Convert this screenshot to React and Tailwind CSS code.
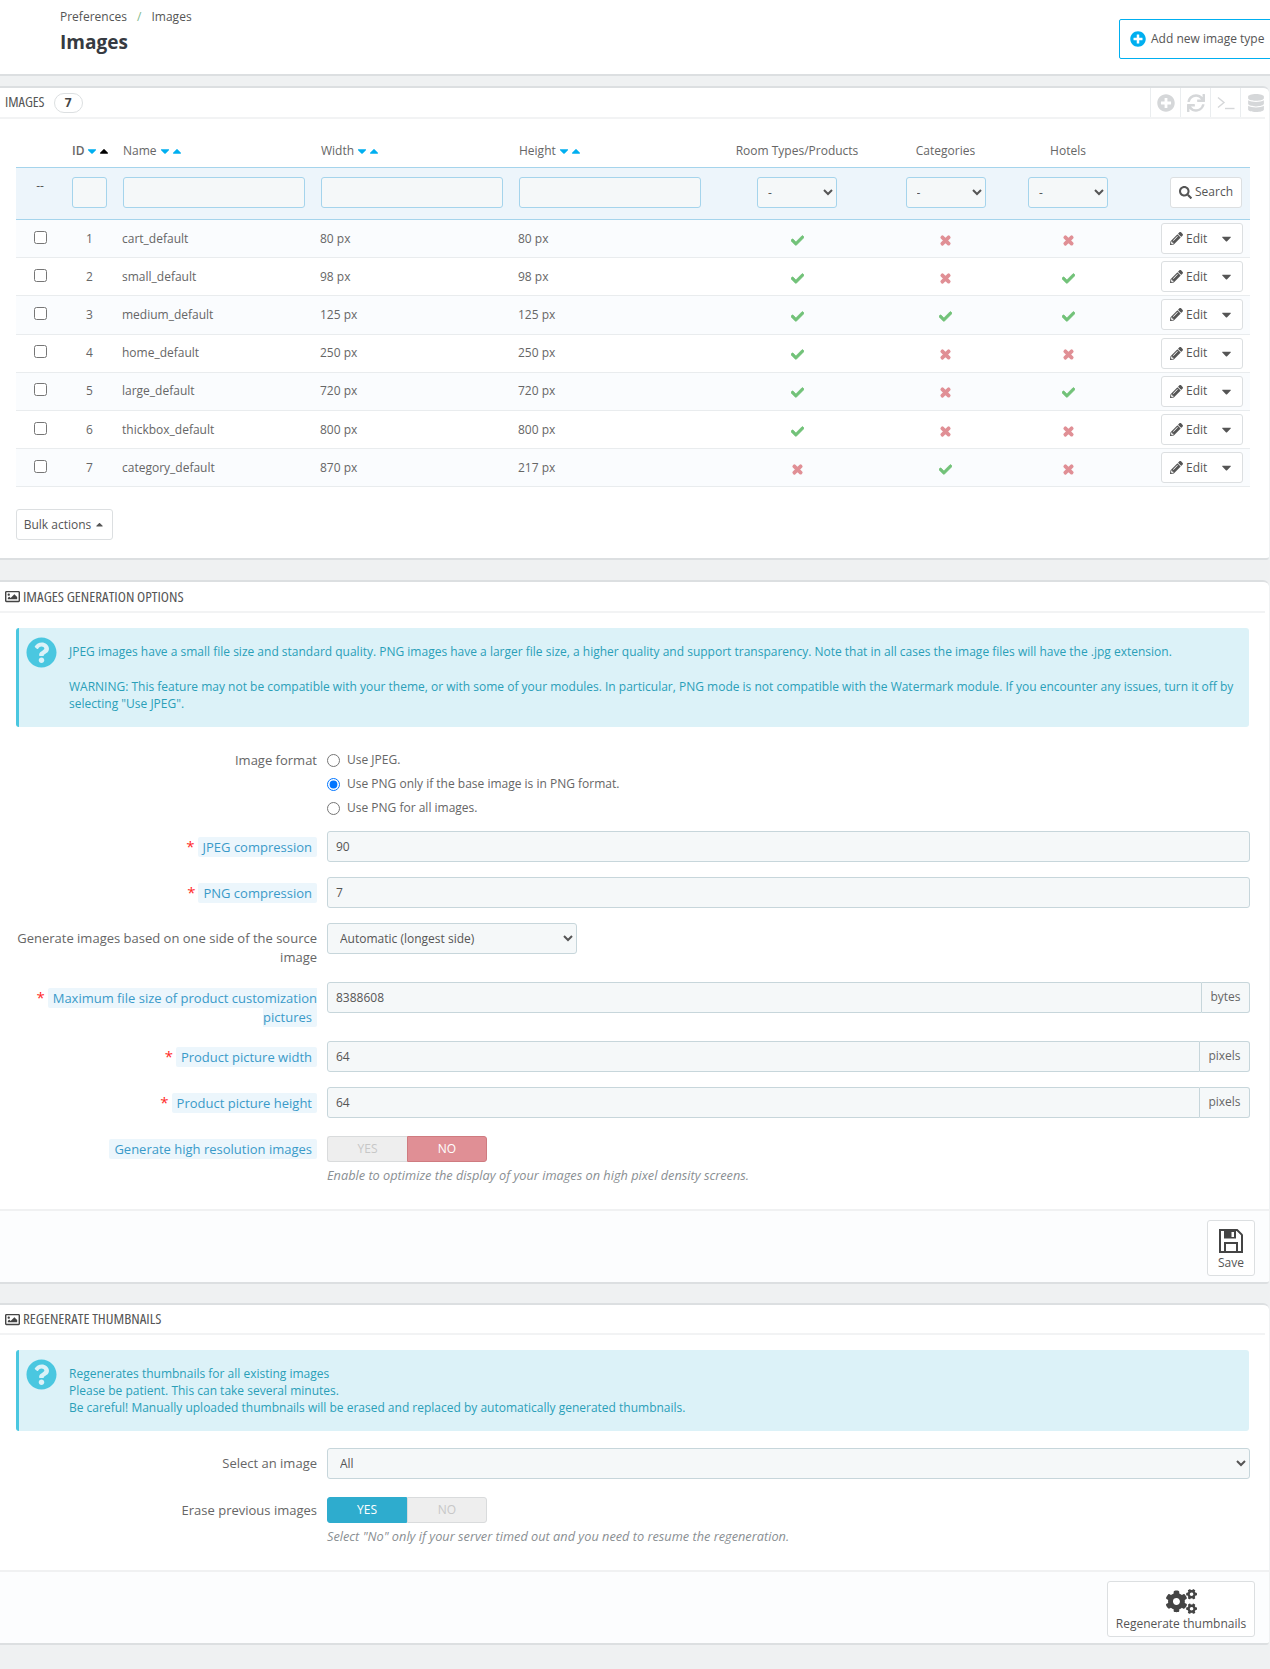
import React from "react";
import { FaPlusCircle, FaSync, FaDatabase, FaCheck, FaTimes, FaPencilAlt, FaSearch, FaCaretDown, FaCaretUp, FaRegImage, FaQuestionCircle, FaCogs } from "react-icons/fa";

const rows = [
  [1, "cart_default", "80 px", "80 px", 1, 0, 0],
  [2, "small_default", "98 px", "98 px", 1, 0, 1],
  [3, "medium_default", "125 px", "125 px", 1, 1, 1],
  [4, "home_default", "250 px", "250 px", 1, 0, 0],
  [5, "large_default", "720 px", "720 px", 1, 0, 1],
  [6, "thickbox_default", "800 px", "800 px", 1, 0, 0],
  [7, "category_default", "870 px", "217 px", 0, 1, 0],
];

function Sort({ active }) {
  return (
    <span className="inline-flex items-center ml-[1px] text-[#00aff0] text-[14px]">
      <FaCaretDown className="-mr-[2px]" />
      <FaCaretUp className={active ? "text-black" : ""} />
    </span>
  );
}

function Mark({ on }) {
  return on
    ? <FaCheck stroke="currentColor" strokeWidth="30" className="text-[#72c279] text-[13px] mt-[3px]" />
    : <FaTimes stroke="currentColor" strokeWidth="50" className="text-[#e08f95] text-[13px] mt-[3px]" />;
}

function Title({ children, size = "text-[15px]" }) {
  return <span className={`${size} -mt-[2px] text-[#555] uppercase whitespace-nowrap font-stretch-[75%]`}>{children}</span>;
}

function Heading({ children, h = "h-[31px]" }) {
  return (
    <div className={`${h} mr-[4px] border-b-2 border-[#f2f3f4] flex items-center pl-[5px]`}>
      <FaRegImage className="text-[15px] mr-[3px] text-[#444]" />
      <Title>{children}</Title>
    </div>
  );
}

function Panel({ children }) {
  return <section className="bg-white border-t-2 border-b-2 border-[#dcdfe1] rounded-tr-[6px] rounded-br-[3px] mr-[1px]">{children}</section>;
}

function Info({ children, h }) {
  return (
    <div className={`mx-[20px] ml-[16px] mt-[15px] bg-[#dcf2f8] border-l-[3px] border-[#4ac7e0] rounded-[3px] flex text-[#2a9fb8] text-[12px] leading-[17px] ${h}`}>
      <FaQuestionCircle className="text-[#4ac7e0] text-[31px] ml-[7px] mt-[9px] shrink-0" />
      <div className="ml-[12px] flex-1">{children}</div>
    </div>
  );
}

function Row({ label, req, tip, top, mt, children }) {
  return (
    <div className={`flex ${mt}`}>
      <div className="w-[317px] shrink-0 text-right text-[13px] leading-[19px] text-[#666]" style={{ paddingTop: top }}>
        {req && <span className="text-[#ff2a2a] text-[15px] mr-[3px]">*</span>}
        {tip ? <span className="bg-[#ecf6fc] text-[#3a9ac9] px-[5px] py-[1px] rounded-[2px]">{label}</span> : label}
      </div>
      <div className="ml-[10px] w-[923px]">{children}</div>
    </div>
  );
}

const inputCls = "h-[31px] bg-[#f5f8f9] border border-[#c7d6db] rounded-[3px] text-[12px] text-[#555] flex items-center pl-[8px]";

function Input({ value, addon }) {
  if (addon) {
    return (
      <div className="flex h-[31px]">
        <div className={`${inputCls} flex-1 rounded-r-none`}>{value}</div>
        <div className={`bg-[#f5f8f9] border border-l-0 border-[#c7d6db] rounded-r-[3px] text-[12px] text-[#666] flex items-center justify-center pb-[1px] ${addon === "bytes" ? "w-[48px]" : "w-[50px]"}`}>{addon}</div>
      </div>
    );
  }
  return <div className={inputCls}>{value}</div>;
}

function Select({ value, w }) {
  return (
    <select defaultValue={value} className={`h-[31px] bg-[#f5f8f9] border border-[#c7d6db] rounded-[3px] text-[12px] text-[#555] pl-[8px] ${w}`}>
      <option>{value}</option>
    </select>
  );
}

function Toggle({ yes }) {
  return (
    <div className="flex w-[160px] h-[26px] text-[12px]">
      <div className={`w-[80px] flex items-center justify-center rounded-l-[3px] ${yes ? "bg-[#2eacce] text-white border border-[#2eacce]" : "bg-[#eeeeee] text-[#c7c7c7] border border-[#d9dbdc] border-r-0"}`}>YES</div>
      <div className={`w-[80px] flex items-center justify-center rounded-r-[3px] ${yes ? "bg-[#eeeeee] text-[#c7c7c7] border border-[#d9dbdc]" : "bg-[#e08f95] text-white border border-[#cf7b80]"}`}>NO</div>
    </div>
  );
}

function Help({ children }) {
  return <p className="mt-[5px] text-[12.75px] leading-[17px] italic text-[#8a8f93]">{children}</p>;
}

function Radio({ label, on }) {
  return (
    <label className="flex items-center h-[24px] text-[12px] text-[#666]">
      <input type="radio" name="fmt" defaultChecked={on} className="w-[13px] h-[13px] m-0" />
      <span className="ml-[7px]">{label}</span>
    </label>
  );
}

function FootBtn({ icon, label, w }) {
  return (
    <div className="h-[73px] bg-[#fcfdfe] border-t-2 border-[#f0f1f2] flex justify-end pt-[9px] pr-[14px] rounded-br-[3px]">
      <div className={`h-[56px] bg-white border border-[#dcdfe1] rounded-[3px] flex flex-col items-center justify-end pb-[4px] text-[12px] leading-[16px] text-[#555] ${w}`}>
        {icon}
        <span>{label}</span>
      </div>
    </div>
  );
}

function ToolIcon({ children }) {
  return <div className="w-[30px] h-[29px] border-l border-[#eaedef] flex items-center justify-center text-[#d5d7d9] text-[18px]">{children}</div>;
}

function Floppy() {
  return (
    <svg width="24" height="24" viewBox="0 0 24 24" className="mb-[2px] text-[#444]">
      <path fill="currentColor" d="M0 0H18.5L24 5.5V24H0Z" />
      <path fill="#fff" d="M2 2H5V9.5H17V2H17.7L22 6.3V22H19V13H5V22H2Z" />
      <path fill="#fff" d="M7 15H17V22H7Z" />
      <path fill="#fff" d="M12.5 3H15V8H12.5Z" />
    </svg>
  );
}

const filterCls = "h-[31px] bg-[#f5f8f9] border border-[#a5d4ec] rounded-[3px]";

export default function App() {
  return (
    <div className="w-[1270px] min-h-[1669px] bg-[#eff1f2] overflow-hidden text-[#666]" style={{ fontFamily: '"Open Sans",sans-serif' }}>
      <header className="h-[76px] bg-white border-b-2 border-[#dcdfe1] flex">
        <div className="ml-[60px] pt-[8px]">
          <div className="text-[12px] leading-[17px] text-[#555]">
            Preferences <span className="text-[#7fb98e] mx-[7px]">/</span> Images
          </div>
          <h1 className="mt-[4px] text-[19px] leading-[27px] font-bold text-[#363a41]">Images</h1>
        </div>
        <div className="ml-auto mt-[19px] -mr-[6px] h-[40px] w-[157px] shrink-0 border border-[#00aff0] rounded-l-[2px] flex items-center pl-[10px] text-[12px] text-[#555] whitespace-nowrap">
          <FaPlusCircle className="text-[#00aff0] text-[16px] mr-[5px]" />
          Add new image type
        </div>
      </header>

      <div className="mt-[10px]">
        <Panel>
          <div className="h-[31px] mr-[4px] border-b-2 border-[#f2f3f4] flex items-center pl-[5px]">
            <Title size="text-[14.5px]">Images</Title>
            <span className="ml-[9px] w-[29px] h-[20px] border border-[#dcdfe1] rounded-full flex items-center justify-center text-[12px] font-bold text-[#444]">7</span>
            <div className="ml-auto -mr-[5px] flex">
              <ToolIcon><FaPlusCircle /></ToolIcon>
              <ToolIcon><FaSync /></ToolIcon>
              <ToolIcon>
                <svg width="18" height="14" viewBox="0 0 18 14" fill="none" stroke="currentColor" strokeWidth="1.4">
                  <path d="M1 1.5 7 6.5 1 11.5" />
                  <path d="M8 12.5H17.5" />
                </svg>
              </ToolIcon>
              <ToolIcon><FaDatabase /></ToolIcon>
            </div>
          </div>

          <div className="ml-[16px] w-[1234px] mt-[17px] text-[12px]">
            <div className="flex h-[31px] pb-[2px] items-center text-[#666]">
              <div className="w-[48px]" />
              <div className="w-[51px] pl-[8px] font-semibold whitespace-nowrap flex items-center">ID<Sort active /></div>
              <div className="w-[198px] pl-[8px] flex items-center">Name<Sort /></div>
              <div className="w-[198px] pl-[8px] flex items-center">Width<Sort /></div>
              <div className="w-[198px] pl-[8px] flex items-center">Height<Sort /></div>
              <div className="w-[176px] text-center">Room Types/Products</div>
              <div className="w-[121px] text-center">Categories</div>
              <div className="w-[124px] text-center">Hotels</div>
            </div>
            <div className="flex h-[53px] pb-[3px] items-center bg-[#edf5fb] border-y border-[#a5d4ec]">
              <div className="w-[48px] text-center text-[#555] -mt-[13px]">--</div>
              <div className="w-[51px] pl-[8px]"><div className={`${filterCls} w-[35px]`} /></div>
              <div className="w-[198px] pl-[8px]"><div className={`${filterCls} w-[182px]`} /></div>
              <div className="w-[198px] pl-[8px]"><div className={`${filterCls} w-[182px]`} /></div>
              <div className="w-[198px] pl-[8px]"><div className={`${filterCls} w-[182px]`} /></div>
              <div className="w-[176px] flex justify-center"><select className={`${filterCls} w-[80px] pl-[6px] text-[12px] text-[#555]`}><option>-</option></select></div>
              <div className="w-[121px] flex justify-center"><select className={`${filterCls} w-[80px] pl-[6px] text-[12px] text-[#555]`}><option>-</option></select></div>
              <div className="w-[124px] flex justify-center"><select className={`${filterCls} w-[80px] pl-[6px] text-[12px] text-[#555]`}><option>-</option></select></div>
              <div className="w-[120px] flex justify-end pr-[8px]">
                <div className="h-[31px] w-[72px] bg-white border border-[#dcdfe1] rounded-[3px] flex items-center justify-center text-[#555]"><FaSearch className="text-[13px] mr-[3px]" />Search</div>
              </div>
            </div>
            {rows.map((r, i) => (
              <div key={r[0]} className={`flex h-[38.2px] items-center border-b border-[#e9ecee] text-[#666] ${i % 2 === 0 ? "bg-[#fafcfe]" : "bg-white"}`}>
                <div className="w-[48px] flex justify-center -mt-[3px]"><input type="checkbox" className="w-[13px] h-[13px] m-0" /></div>
                <div className="w-[51px] text-center">{r[0]}</div>
                <div className="w-[198px] pl-[7px]">{r[1]}</div>
                <div className="w-[198px] pl-[7px]">{r[2]}</div>
                <div className="w-[198px] pl-[7px]">{r[3]}</div>
                <div className="w-[176px] flex justify-center"><Mark on={r[4]} /></div>
                <div className="w-[121px] flex justify-center"><Mark on={r[5]} /></div>
                <div className="w-[124px] flex justify-center"><Mark on={r[6]} /></div>
                <div className="w-[120px] flex justify-end pr-[7px]">
                  <div className="h-[31px] w-[82px] bg-white border border-[#dcdfe1] rounded-[3px] flex items-center pl-[8px] text-[#555]">
                    <FaPencilAlt className="text-[13px] mr-[3px]" />Edit
                    <FaCaretDown className="text-[15px] ml-auto mr-[8px]" />
                  </div>
                </div>
              </div>
            ))}
          </div>

          <div className="ml-[16px] mt-[22px] mb-[18px] w-[97px] h-[31px] border border-[#dcdfe1] rounded-[3px] flex items-center justify-center text-[12px] text-[#555]">
            Bulk actions<FaCaretUp className="text-[11px] ml-[3px]" />
          </div>
        </Panel>
      </div>

      <div className="mt-[20px]">
        <Panel>
          <Heading>Images generation options</Heading>
          <Info h="h-[99px]">
            <p className="pt-[15px]">JPEG images have a small file size and standard quality. PNG images have a larger file size, a higher quality and support transparency. Note that in all cases the image files will have the .jpg extension.</p>
            <p className="pt-[18px] pr-[12px]">WARNING: This feature may not be compatible with your theme, or with some of your modules. In particular, PNG mode is not compatible with the Watermark module. If you encounter any issues, turn it off by selecting "Use JPEG".</p>
          </Info>
          <Row label="Image format" mt="mt-[21px]" top="3px">
            <Radio label="Use JPEG." />
            <Radio label="Use PNG only if the base image is in PNG format." on />
            <Radio label="Use PNG for all images." />
          </Row>
          <Row label="JPEG compression" req tip mt="mt-[11px]" top="6px"><Input value="90" /></Row>
          <Row label="PNG compression" req tip mt="mt-[15px]" top="6px"><Input value="7" /></Row>
          <Row label="Generate images based on one side of the source image" mt="mt-[15px]" top="6px"><Select value="Automatic (longest side)" w="w-[250px]" /></Row>
          <Row label="Maximum file size of product customization pictures" req tip mt="mt-[15px]" top="6px"><Input value="8388608" addon="bytes" /></Row>
          <Row label="Product picture width" req tip mt="mt-[14px]" top="6px"><Input value="64" addon="pixels" /></Row>
          <Row label="Product picture height" req tip mt="mt-[15px]" top="6px"><Input value="64" addon="pixels" /></Row>
          <Row label="Generate high resolution images" tip mt="mt-[18px]" top="4px">
            <Toggle />
            <Help>Enable to optimize the display of your images on high pixel density screens.</Help>
          </Row>
          <div className="mt-[25px]" />
          <FootBtn w="w-[48px]" label="Save" icon={<Floppy />} />
        </Panel>
      </div>

      <div className="mt-[19px]">
        <Panel>
          <Heading h="h-[30px]">Regenerate thumbnails</Heading>
          <Info h="h-[81px]">
            <p className="pt-[15px]">Regenerates thumbnails for all existing images<br />Please be patient. This can take several minutes.<br />Be careful! Manually uploaded thumbnails will be erased and replaced by automatically generated thumbnails.</p>
          </Info>
          <Row label="Select an image" mt="mt-[17px]" top="6px"><Select value="All" w="w-full" /></Row>
          <Row label="Erase previous images" mt="mt-[18px]" top="4px">
            <Toggle yes />
            <Help>Select "No" only if your server timed out and you need to resume the regeneration.</Help>
          </Row>
          <div className="mt-[25px]" />
          <FootBtn w="w-[148px]" label="Regenerate thumbnails" icon={<FaCogs className="text-[31px] text-[#444] -mb-[1px]" />} />
        </Panel>
      </div>
    </div>
  );
}
